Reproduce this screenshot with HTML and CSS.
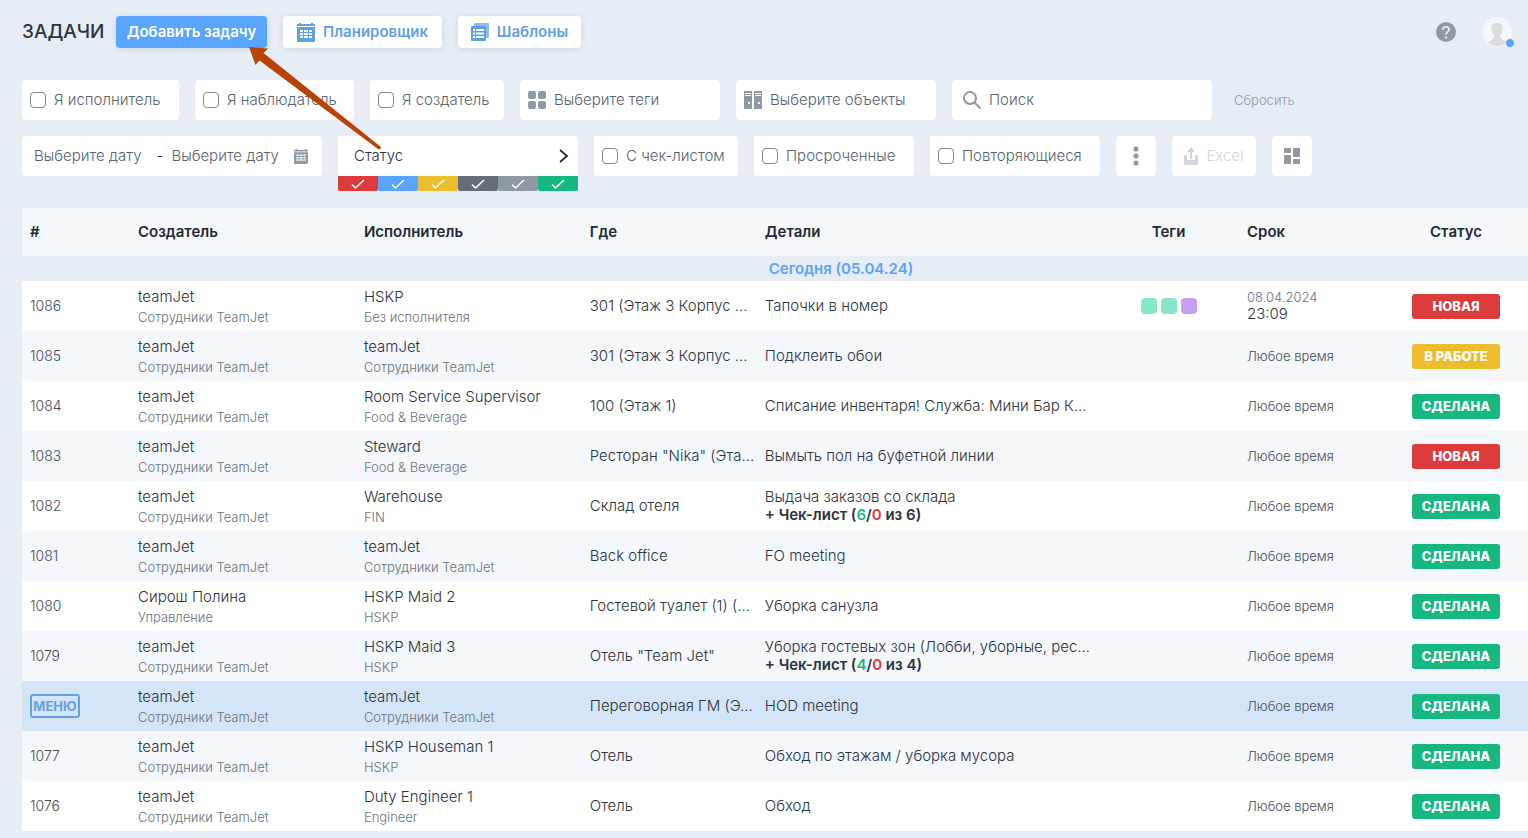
FILE: index.html
```html
<!DOCTYPE html>
<html lang="ru">
<head>
<meta charset="utf-8">
<meta name="viewport" content="width=device-width, initial-scale=1">
<title>Задачи</title>
<link rel="stylesheet" href="styles.css">
</head>
<body>
<svg class="defs" aria-hidden="true">
  <symbol id="calendar" viewBox="0 0 18 19"><path fill-rule="evenodd" d="M0 1h2V0h2v1h10V0h2v1h2v2H0zM0 4h18v14q0 1-1 1H1q-1 0-1-1zM3 7v2h3V7zm4 0v2h4V7zm5 0v2h3V7zM3 10v2h3v-2zm4 0v2h4v-2zm5 0v2h3v-2zM3 13v2h3v-2zm4 0v2h4v-2zm5 0v2h3v-2z"/></symbol>
  <symbol id="check" viewBox="0 0 14 10"><path d="M1 5.500 4.500 9 13 1" fill="none" stroke="#fff" stroke-width="1.500"/></symbol>
</svg>

<header class="topbar">
  <h1 class="title">ЗАДАЧИ</h1>
  <button class="btn btn-primary" type="button">Добавить задачу</button>
  <button class="btn btn-planner" type="button"><svg class="icon" width="18" height="19"><use href="#calendar"/></svg>Планировщик</button>
  <button class="btn btn-templates" type="button"><svg class="icon" width="18" height="18" viewBox="0 0 18 18"><path d="M4 0h13q1 0 1 1v13q0 1-1 1h-2V3H3V1q0-1 1-1z" opacity=".7"/><path fill-rule="evenodd" d="M1 3h13q1 0 1 1v13q0 1-1 1H1q-1 0-1-1V4q0-1 1-1zm1 3v2h2V6zm3 0v2h8V6zm-3 3.500v2h2v-2zm3 0v2h8v-2zM2 13v2h2v-2zm3 0v2h8v-2z"/></svg>Шаблоны</button>
  <div class="account">
    <button class="plain" type="button" aria-label="Помощь"><svg width="20" height="20" viewBox="0 0 20 20"><circle cx="10" cy="10" r="10" fill="#8f99a4"/><path d="M6.800 7.800Q6.800 4.800 10 4.800t3.200 2.800c0 2-3.100 2.200-3.100 4.800" fill="none" stroke="#e9eef5" stroke-width="1.800"/><circle cx="10" cy="15.400" r="1.200" fill="#e9eef5"/></svg></button>
    <button class="plain avatar" type="button" aria-label="Профиль"><svg width="30" height="30" viewBox="0 0 30 30"><circle cx="15" cy="15" r="15" fill="#f4f7fb"/><path d="M9.500 12C9 8 11 6 15 6s6 2 5.500 6c0 3-1 5-2 6v3c1 2 4 2.500 6 4.500a15 15 0 0 1-18.500.500c1.500-2.500 5-3 6-5v-3c-1.500-1-2.500-3-2.500-6z" fill="#dcdcdc"/></svg><span class="online"></span></button>
  </div>
</header>

<form class="filters">
  <div class="filter-row">
    <label class="chip w-executor"><input type="checkbox" class="box">Я исполнитель</label>
    <label class="chip w-watcher"><input type="checkbox" class="box">Я наблюдатель</label>
    <label class="chip w-creator"><input type="checkbox" class="box">Я создатель</label>
    <label class="chip w-select"><svg class="icon" width="18" height="18"><rect width="8" height="8" rx="2"/><rect x="10" width="8" height="8" rx="2"/><rect y="10" width="8" height="8" rx="2"/><rect x="10" y="10" width="8" height="8" rx="2"/></svg><select class="field" aria-label="Теги"><option>Выберите теги</option></select></label>
    <label class="chip w-select"><svg class="icon" width="18" height="18" viewBox="0 0 18 18"><path fill-rule="evenodd" d="M0 0h8v18H0zM1 2v1h6V2zm0 2v1h6V4zm3 7v2h2v-2zM10 0h8v18h-8zm1 2v1h6V2zm0 2v1h6V4zm3 7v2h2v-2z"/></svg><select class="field" aria-label="Объекты"><option>Выберите объекты</option></select></label>
    <label class="chip chip-search"><svg class="icon" width="18" height="18" fill="none" stroke="currentColor" stroke-width="2"><circle cx="7" cy="7" r="6"/><path d="m11.500 11.500 6 6"/></svg><input class="field" type="text" placeholder="Поиск" aria-label="Поиск"></label>
    <button class="plain reset" type="reset">Сбросить</button>
  </div>
  <div class="filter-row">
    <div class="chip chip-dates"><input class="field" type="text" placeholder="Выберите дату" aria-label="Дата с"><span class="dash">-</span><input class="field" type="text" placeholder="Выберите дату" aria-label="Дата по"><svg class="icon" width="14" height="15"><use href="#calendar"/></svg></div>
    <div class="status-filter">
      <button class="chip status-toggle" type="button">Статус<svg width="10" height="14" viewBox="0 0 10 14"><path d="m1 1 7 6-7 6" fill="none" stroke="#222a33" stroke-width="1.800"/></svg></button>
      <div class="status-set">
        <label class="status-option red"><input type="checkbox" checked aria-label="Новая"><svg width="14" height="10"><use href="#check"/></svg></label>
        <label class="status-option blue"><input type="checkbox" checked aria-label="Принята"><svg width="14" height="10"><use href="#check"/></svg></label>
        <label class="status-option yellow"><input type="checkbox" checked aria-label="В работе"><svg width="14" height="10"><use href="#check"/></svg></label>
        <label class="status-option dark"><input type="checkbox" checked aria-label="Отложена"><svg width="14" height="10"><use href="#check"/></svg></label>
        <label class="status-option gray"><input type="checkbox" checked aria-label="Отменена"><svg width="14" height="10"><use href="#check"/></svg></label>
        <label class="status-option green"><input type="checkbox" checked aria-label="Сделана"><svg width="14" height="10"><use href="#check"/></svg></label>
      </div>
    </div>
    <label class="chip w-checklist"><input type="checkbox" class="box">С чек-листом</label>
    <label class="chip w-overdue"><input type="checkbox" class="box">Просроченные</label>
    <label class="chip w-repeat"><input type="checkbox" class="box">Повторяющиеся</label>
    <button class="chip chip-icon" type="button" aria-label="Ещё"><svg class="icon" width="6" height="20"><circle cx="3" cy="3" r="2.600"/><circle cx="3" cy="10" r="2.600"/><circle cx="3" cy="17" r="2.600"/></svg></button>
    <button class="chip chip-excel" type="button" disabled><svg width="14" height="18" viewBox="0 0 14 18" fill="currentColor"><path d="M6 12V5H3l4-5 4 5H8v7zM1 8h2v5h8V8h2q1 0 1 1v8q0 1-1 1H1q-1 0-1-1V9q0-1 1-1z"/></svg>Excel</button>
    <button class="chip chip-icon" type="button" aria-label="Вид"><svg class="icon" width="16" height="16"><rect width="7" height="5" rx="1"/><rect y="7" width="7" height="9" rx="1"/><rect x="9" width="7" height="9" rx="1"/><rect x="9" y="11" width="7" height="5" rx="1"/></svg></button>
  </div>
</form>

<table class="tasks">
  <colgroup><col class="c-id"><col class="c-person"><col class="c-person"><col class="c-place"><col class="c-details"><col class="c-tags"><col class="c-due"><col class="c-status"></colgroup>
  <thead><tr><th>#</th><th>Создатель</th><th>Исполнитель</th><th>Где</th><th>Детали</th><th class="center">Теги</th><th>Срок</th><th class="center">Статус</th></tr></thead>
  <tbody>
    <tr class="day"><th colspan="8">Сегодня (05.04.24)</th></tr>
    <tr><td class="id">1086</td><td class="who">teamJet<small>Сотрудники TeamJet</small></td><td class="who">HSKP<small>Без исполнителя</small></td><td>301 (Этаж 3 Корпус ...</td><td>Тапочки в номер</td><td><div class="tags"><i class="tag mint"></i><i class="tag mint"></i><i class="tag violet"></i></div></td><td class="date"><small>08.04.2024</small>23:09</td><td><span class="badge red">НОВАЯ</span></td></tr>
    <tr><td class="id">1085</td><td class="who">teamJet<small>Сотрудники TeamJet</small></td><td class="who">teamJet<small>Сотрудники TeamJet</small></td><td>301 (Этаж 3 Корпус ...</td><td>Подклеить обои</td><td></td><td class="any">Любое время</td><td><span class="badge yellow">В РАБОТЕ</span></td></tr>
    <tr><td class="id">1084</td><td class="who">teamJet<small>Сотрудники TeamJet</small></td><td class="who">Room Service Supervisor<small>Food &amp; Beverage</small></td><td>100 (Этаж 1)</td><td>Списание инвентаря! Служба: Мини Бар К...</td><td></td><td class="any">Любое время</td><td><span class="badge green">СДЕЛАНА</span></td></tr>
    <tr><td class="id">1083</td><td class="who">teamJet<small>Сотрудники TeamJet</small></td><td class="who">Steward<small>Food &amp; Beverage</small></td><td>Ресторан "Nika" (Эта...</td><td>Вымыть пол на буфетной линии</td><td></td><td class="any">Любое время</td><td><span class="badge red">НОВАЯ</span></td></tr>
    <tr><td class="id">1082</td><td class="who">teamJet<small>Сотрудники TeamJet</small></td><td class="who">Warehouse<small>FIN</small></td><td>Склад отеля</td><td>Выдача заказов со склада<b>+ Чек-лист (<span class="done">6</span>/<span class="failed">0</span> из 6)</b></td><td></td><td class="any">Любое время</td><td><span class="badge green">СДЕЛАНА</span></td></tr>
    <tr><td class="id">1081</td><td class="who">teamJet<small>Сотрудники TeamJet</small></td><td class="who">teamJet<small>Сотрудники TeamJet</small></td><td>Back office</td><td>FO meeting</td><td></td><td class="any">Любое время</td><td><span class="badge green">СДЕЛАНА</span></td></tr>
    <tr><td class="id">1080</td><td class="who">Сирош Полина<small>Управление</small></td><td class="who">HSKP Maid 2<small>HSKP</small></td><td>Гостевой туалет (1) (...</td><td>Уборка санузла</td><td></td><td class="any">Любое время</td><td><span class="badge green">СДЕЛАНА</span></td></tr>
    <tr><td class="id">1079</td><td class="who">teamJet<small>Сотрудники TeamJet</small></td><td class="who">HSKP Maid 3<small>HSKP</small></td><td>Отель "Team Jet"</td><td>Уборка гостевых зон (Лобби, уборные, рес...<b>+ Чек-лист (<span class="done">4</span>/<span class="failed">0</span> из 4)</b></td><td></td><td class="any">Любое время</td><td><span class="badge green">СДЕЛАНА</span></td></tr>
    <tr class="active"><td class="id"><button class="menu" type="button">МЕНЮ</button></td><td class="who">teamJet<small>Сотрудники TeamJet</small></td><td class="who">teamJet<small>Сотрудники TeamJet</small></td><td>Переговорная ГМ (Э...</td><td>HOD meeting</td><td></td><td class="any">Любое время</td><td><span class="badge green">СДЕЛАНА</span></td></tr>
    <tr><td class="id">1077</td><td class="who">teamJet<small>Сотрудники TeamJet</small></td><td class="who">HSKP Houseman 1<small>HSKP</small></td><td>Отель</td><td>Обход по этажам / уборка мусора</td><td></td><td class="any">Любое время</td><td><span class="badge green">СДЕЛАНА</span></td></tr>
    <tr><td class="id">1076</td><td class="who">teamJet<small>Сотрудники TeamJet</small></td><td class="who">Duty Engineer 1<small>Engineer</small></td><td>Отель</td><td>Обход</td><td></td><td class="any">Любое время</td><td><span class="badge green">СДЕЛАНА</span></td></tr>
  </tbody>
</table>

<svg class="pointer" width="134" height="104" viewBox="0 0 134 104" aria-hidden="true"><path d="M1 0 20 1.500 15.500 6 133 100q0 3-3 2L11.500 13.500 7.500 18z" fill="#b94206"/></svg>
</body>
</html>
```
FILE: styles.css
```css
* { box-sizing: border-box; }
body {
  margin: 0;
  padding: 0 0 8px 22px;
  background: #e6edf5;
  color: #2b333c;
  font: 300 15px/20px Inter, "Open Sans", sans-serif;
  overflow-x: hidden;
}
button, input, select { font: inherit; color: inherit; }
button { cursor: pointer; }
.defs { position: absolute; width: 0; height: 0; }
.icon { flex: none; fill: currentColor; }
.icon[fill="none"] { fill: none; }
.plain { display: block; padding: 0; border: 0; background: none; }
.plain svg { display: block; }

.topbar { display: flex; align-items: center; gap: 16px; padding: 16px 16px 0 0; }
.title { width: 78px; margin: 0; font-size: 19px; font-weight: 500; white-space: nowrap; }
.btn {
  display: flex;
  align-items: center;
  justify-content: center;
  gap: 8px;
  height: 32px;
  padding: 0;
  border: 0;
  border-radius: 4px;
  background: #fff;
  color: #5f9fe6;
  font-size: 15px;
  font-weight: 600;
  box-shadow: 0 1px 6px rgb(80 110 150 / 18%);
}
.btn-primary { width: 151px; background: #58a4ff; color: #fff; }
.btn-planner { width: 159px; }
.btn-templates { width: 123px; }
.account { display: flex; align-items: center; gap: 26px; margin-left: auto; }
.avatar { position: relative; }
.online {
  position: absolute;
  right: -3px;
  bottom: -1px;
  width: 10px;
  height: 10px;
  border: 1px solid #e6edf5;
  border-radius: 50%;
  background: #58a4ff;
}

.filters { display: grid; gap: 16px; padding: 32px 0 16px; }
.filter-row { display: flex; align-items: flex-start; gap: 16px; }
.chip {
  display: flex;
  flex: none;
  align-items: center;
  gap: 8px;
  height: 40px;
  padding: 0 8px;
  border: 0;
  border-radius: 4px;
  background: #fff;
  color: #59636d;
  font-size: 15px;
  white-space: nowrap;
}
.chip .icon { color: #8f99a4; }
.box {
  appearance: none;
  flex: none;
  width: 16px;
  height: 16px;
  margin: 0;
  border: 1px solid #7f8993;
  border-radius: 4px;
  background: #fff;
}
.field {
  appearance: none;
  flex: 1;
  width: 0;
  min-width: 0;
  padding: 0;
  border: 0;
  outline: 0;
  background: none;
}
.field::placeholder { color: #59636d; opacity: 1; }
.w-executor { width: 157px; }
.w-watcher { width: 159px; }
.w-creator { width: 134px; }
.w-select { width: 200px; }
.chip-search { width: 260px; padding: 0 11px; }
.reset { align-self: center; margin-left: 6px; color: #8f99a4; font-size: 13px; }
.chip-dates { width: 300px; padding: 0 14px 0 12px; }
.dash { color: #2b333c; }
.status-filter { width: 240px; }
.status-toggle { justify-content: space-between; width: 100%; padding: 0 9px 0 16px; border-radius: 4px 4px 0 0; color: #2b333c; }
.status-set { display: flex; height: 15px; margin-bottom: -15px; }
.status-option { display: grid; flex: 1; place-items: center; border-radius: 0 0 2px 2px; }
.status-option input { position: absolute; margin: 0; opacity: 0; }
.w-checklist { width: 144px; }
.w-overdue { width: 160px; }
.w-repeat { width: 170px; }
.chip-icon { justify-content: center; width: 40px; }
.chip-excel { justify-content: center; width: 84px; color: #d0d6dc; }

.red { background: #db3b3b; }
.blue { background: #58a4ff; }
.yellow { background: #ecbd2d; }
.dark { background: #646e7a; }
.gray { background: #8f99a4; }
.green { background: #17b780; }

.tasks { width: 100%; margin-top: 16px; border-collapse: separate; border-spacing: 0; table-layout: fixed; }
.c-id { width: 108px; }
.c-person { width: 15%; }
.c-place { width: 175px; }
.c-tags { width: 141px; }
.c-due { width: 145px; }
.c-status { width: 144px; }
.tasks th, .tasks td { padding: 0 8px; text-align: left; white-space: nowrap; }
.tasks thead th { height: 48px; background: #f4f7fc; font-weight: 600; color: #222a33; }
.tasks thead th:first-child { border-radius: 4px 0 0; }
.tasks .center { text-align: center; }
.tasks .day th { height: 25px; padding-left: 140px; text-align: center; color: #58a4ff; font-weight: 600; }
.tasks td { height: 50px; background: #fff; line-height: 18px; }
.tasks td.who { padding-top: 2px; line-height: 20px; }
.tasks tr:nth-child(odd) td { background: #f4f7fc; }
.tasks tr.active td { background: #d4e5f7; }
.tasks small { display: block; color: #69737e; font-size: 13px; line-height: 20px; }
.tasks b { display: block; font-weight: 600; }
.tasks .id { font-size: 14px; color: #444d57; }
.tasks .any { font-size: 13px; color: #444d57; }
.tasks .date small { line-height: 16px; }
.tasks .done { color: #17b780; }
.tasks .failed { color: #db3b3b; }
.tags { display: flex; justify-content: center; gap: 4px; }
.tag { width: 16px; height: 16px; border-radius: 4px; }
.mint { background: #85e6c8; }
.violet { background: #c7a0f5; }
.badge {
  display: block;
  width: 88px;
  margin: 0 auto;
  border-radius: 3px;
  color: #fff;
  font-size: 13px;
  font-weight: 800;
  line-height: 25px;
  text-align: center;
}
.menu {
  display: block;
  width: 50px;
  height: 24px;
  padding: 0;
  border: 2px solid #61a2ea;
  border-radius: 3px;
  background: none;
  color: #61a2ea;
  font-size: 13px;
  font-weight: 700;
}

/* Callout arrow laid over the page */
.pointer { position: absolute; left: 248px; top: 47px; pointer-events: none; }
```
